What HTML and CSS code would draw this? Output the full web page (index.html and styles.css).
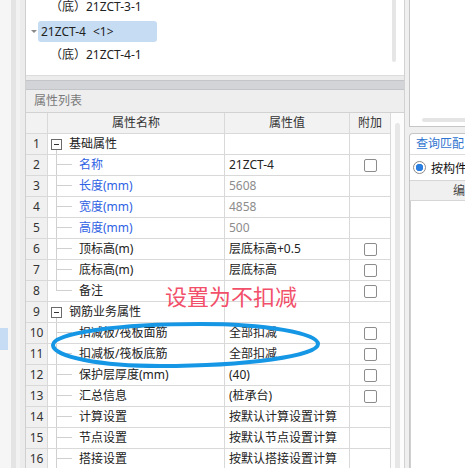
FILE: index.html
```html
<!DOCTYPE html>
<html lang="zh-CN">
<head>
<meta charset="utf-8">
<title>属性列表</title>
<link rel="stylesheet" href="styles.css">
</head>
<body>
<div class="app">
  <aside class="strip">
    <div class="strip-a"><div class="strip-sel"></div></div>
    <div class="strip-b"></div>
    <div class="strip-c"></div>
    <div class="strip-d"></div>
  </aside>

  <main class="center">
    <section class="tree">
      <div class="tree-list">
        <div class="tree-item leaf">（底）21ZCT-3-1</div>
        <div class="tree-item parent"><span class="caret"></span><span class="sel">21ZCT-4<span class="count">&lt;1&gt;</span></span></div>
        <div class="tree-item leaf">（底）21ZCT-4-1</div>
      </div>
      <div class="tree-scroll"><div class="tree-thumb"></div></div>
    </section>
    <div class="gap"></div>
    <div class="band"></div>
    <div class="title">属性列表</div>
    <div class="table-wrap">
      <div class="grid">
        <div class="hcell"></div><div class="hcell">属性名称</div><div class="hcell">属性值</div><div class="hcell">附加</div>

        <div class="num">1</div><div class="name group"><span class="tog"></span>基础属性</div><div class="val"></div><div class="ext"></div>
        <div class="num">2</div><div class="name child blue">名称</div><div class="val">21ZCT-4</div><div class="ext"><span class="chk"></span></div>
        <div class="num">3</div><div class="name child blue">长度(mm)</div><div class="val gray">5608</div><div class="ext"></div>
        <div class="num">4</div><div class="name child blue">宽度(mm)</div><div class="val gray">4858</div><div class="ext"></div>
        <div class="num">5</div><div class="name child blue">高度(mm)</div><div class="val gray">500</div><div class="ext"></div>
        <div class="num">6</div><div class="name child">顶标高(m)</div><div class="val">层底标高+0.5</div><div class="ext"><span class="chk"></span></div>
        <div class="num">7</div><div class="name child">底标高(m)</div><div class="val">层底标高</div><div class="ext"><span class="chk"></span></div>
        <div class="num">8</div><div class="name child last">备注</div><div class="val"></div><div class="ext"><span class="chk"></span></div>
        <div class="num">9</div><div class="name group"><span class="tog"></span>钢筋业务属性</div><div class="val"></div><div class="ext"></div>
        <div class="num">10</div><div class="name child">扣减板/筏板面筋</div><div class="val">全部扣减</div><div class="ext"><span class="chk"></span></div>
        <div class="num">11</div><div class="name child">扣减板/筏板底筋</div><div class="val">全部扣减</div><div class="ext"><span class="chk"></span></div>
        <div class="num">12</div><div class="name child">保护层厚度(mm)</div><div class="val">(40)</div><div class="ext"><span class="chk"></span></div>
        <div class="num">13</div><div class="name child">汇总信息</div><div class="val">(桩承台)</div><div class="ext"><span class="chk"></span></div>
        <div class="num">14</div><div class="name child">计算设置</div><div class="val">按默认计算设置计算</div><div class="ext"></div>
        <div class="num">15</div><div class="name child">节点设置</div><div class="val">按默认节点设置计算</div><div class="ext"></div>
        <div class="num">16</div><div class="name child">搭接设置</div><div class="val">按默认搭接设置计算</div><div class="ext"></div>
      </div>
      <div class="vscroll"><div class="vthumb"></div></div>
    </div>
  </main>

  <div class="gutter"></div>

  <aside class="right">
    <div class="rtop"><div class="hbar"></div></div>
    <div class="rgap"></div>
    <div class="tabpanel">
      <div class="tab">查询匹配</div>
      <div class="radio-row"><span class="radio"></span><span class="radio-label">按构件</span></div>
      <div class="rhead">编</div>
      <div class="rbody"></div>
    </div>
  </aside>

  <div class="note">设置为不扣减</div>
  <svg class="mark" width="465" height="468" viewBox="0 0 465 468" xmlns="http://www.w3.org/2000/svg">
    <path d="M53 345 C53 333 119 324 200 324 C265 324 318 333 318 344 C318 356 247 366 160 366 C101 366 53 357 53 345 Z" fill="none" stroke="#1597e5" stroke-width="4"/>
  </svg>
</div>
</body>
</html>
```

FILE: styles.css
```css
* { box-sizing: border-box; }
html, body { margin: 0; padding: 0; }
body {
  width: 465px;
  height: 468px;
  overflow: hidden;
  background: #efefef;
  font-family: "Noto Sans", "Noto Sans CJK SC", sans-serif;
  font-size: 12px;
  color: #222;
}
.app {
  position: relative;
  display: flex;
  width: 465px;
  height: 468px;
  overflow: hidden;
}

/* left strip */
.strip { display: flex; width: 25px; flex: none; }
.strip-a { width: 11px; background: #f6f6f6; padding-top: 328px; }
.strip-sel { width: 8px; height: 22px; background: #c6dcf4; }
.strip-b { width: 5px; background: #e4e4e4; }
.strip-c { width: 4px; background: #f2f2f2; }
.strip-d { width: 5px; background: #ececec; }

/* centre column */
.center {
  width: 380px;
  flex: none;
  display: flex;
  flex-direction: column;
  border-left: 1px solid #cfcfcf;
  border-right: 1px solid #d2d2d2;
}
.tree {
  height: 76px;
  flex: none;
  background: #fff;
  border-bottom: 1px solid #dcdcdc;
  display: flex;
  overflow: hidden;
}
.tree-list { flex: 1; margin-top: -5px; }
.tree-item {
  height: 24px;
  display: flex;
  align-items: center;
  white-space: pre;
  line-height: 20px;
  color: #222;
}
.tree-item.leaf { padding-left: 24px; }
.tree-item.parent { padding-left: 5px; }
.caret {
  width: 0;
  height: 0;
  border-left: 3px solid transparent;
  border-right: 3px solid transparent;
  border-top: 3px solid #8a8a8a;
  margin-right: 1px;
  margin-top: 1px;
}
.sel {
  width: 119px;
  height: 21px;
  line-height: 21px;
  padding-left: 3px;
  background: #c5dcf3;
  border-radius: 3px;
}
.count { margin-left: 7px; }
.tree-scroll { width: 13px; flex: none; padding-left: 1px; }
.tree-thumb { width: 4px; height: 62px; background: #e6e6e6; border-radius: 0 0 2px 2px; }

.gap { height: 4px; flex: none; background: #ececec; }
.band {
  height: 10px;
  flex: none;
  background: #d3d4d8;
  border-top: 1px solid #c3c4c8;
  border-bottom: 1px solid #c3c4c8;
}
.title {
  height: 22px;
  flex: none;
  background: #eeeeee;
  padding-left: 8px;
  line-height: 22px;
  color: #7a7a7a;
}

.table-wrap {
  flex: 1;
  min-height: 0;
  display: flex;
  background: #fff;
  border-top: 1px solid #d2d2d2;
  overflow: hidden;
}
.grid {
  display: grid;
  grid-template-columns: 22px 177px 125px 41px;
  grid-auto-rows: 21px;
  flex: none;
}
.grid > div {
  border-right: 1px solid #d9d9d9;
  border-bottom: 1px solid #d9d9d9;
  display: flex;
  align-items: center;
  line-height: 20px;
  white-space: nowrap;
  overflow: hidden;
}
.hcell { background: #f2f2f2; justify-content: center; color: #333; }
.num { background: #f0f0f0; justify-content: center; color: #333; }
.name { color: #222; }
.name.group {
  padding-left: 3px;
  background: linear-gradient(#d0d0d0, #d0d0d0) 8px 15px / 1px 6px no-repeat;
}
.name.child {
  padding-left: 31px;
  background-image: linear-gradient(#d0d0d0, #d0d0d0), linear-gradient(#d0d0d0, #d0d0d0);
  background-repeat: no-repeat;
  background-position: 8px 0, 8px 9px;
  background-size: 1px 100%, 16px 1px;
}
.name.child.last { background-size: 1px 10px, 16px 1px; }
.name.blue { color: #2f62e4; }
.tog {
  width: 11px;
  height: 11px;
  flex: none;
  margin-right: 7px;
  border: 1px solid #6a6a6a;
  background: #fff linear-gradient(#333, #333) center / 5px 1px no-repeat;
}
.val { padding-left: 4px; color: #222; }
.val.gray { color: #8c8c8c; }
.ext { justify-content: center; }
.chk {
  width: 13px;
  height: 13px;
  border: 1px solid #8c8c8c;
  border-radius: 2px;
  background: #fff;
}
.vscroll { width: 13px; flex: none; padding: 10px 0 0 4px; background: #fcfcfc; }
.vthumb { width: 5px; height: 100%; background: #e7e7e7; border-radius: 3px 3px 0 0; }

.gutter { width: 4px; flex: none; background: #efefef; }

/* right column */
.right { width: 56px; flex: none; display: flex; flex-direction: column; }
.rtop {
  height: 127px;
  flex: none;
  background: #fff;
  border-left: 1px solid #c6c6c6;
  border-bottom: 1px solid #c6c6c6;
  display: flex;
  flex-direction: column;
  justify-content: flex-end;
  padding: 0 0 4px 12px;
}
.hbar { height: 4px; background: #e4e4e4; border-radius: 2px 0 0 2px; }
.rgap { height: 6px; flex: none; }
.tabpanel {
  flex: 1;
  display: flex;
  flex-direction: column;
  background: #fff;
  border-top: 1px solid #c6c6c6;
  border-left: 1px solid #c6c6c6;
  border-top-left-radius: 4px;
}
.tab {
  height: 21px;
  flex: none;
  padding-left: 6px;
  line-height: 20px;
  color: #2f74d0;
  white-space: nowrap;
  overflow: hidden;
  border-bottom: 1px solid #dcdcdc;
}
.radio-row {
  height: 26px;
  flex: none;
  display: flex;
  align-items: center;
  padding-left: 3px;
  border-bottom: 1px solid #d6d6d6;
  white-space: nowrap;
  overflow: hidden;
}
.radio {
  width: 13px;
  height: 13px;
  flex: none;
  border: 1px solid #8a8a8a;
  border-radius: 50%;
  background: radial-gradient(circle, #2a7fe0 0 3.5px, #fff 4px);
}
.radio-label { margin-left: 5px; color: #111; }
.rhead {
  height: 20px;
  flex: none;
  background: #f0f0f0;
  padding-left: 43px;
  line-height: 19px;
  color: #444;
  border-bottom: 1px solid #d6d6d6;
  white-space: nowrap;
}
.rbody { flex: 1; border-left: 1px solid #cfcfcf; }

/* annotations over the table */
.note {
  position: absolute;
  left: 165px;
  top: 283px;
  font-family: "Noto Sans CJK SC", sans-serif;
  font-size: 22px;
  line-height: 24px;
  color: #f2506a;
  white-space: nowrap;
}
.mark { position: absolute; left: 0; top: 0; pointer-events: none; }
```
